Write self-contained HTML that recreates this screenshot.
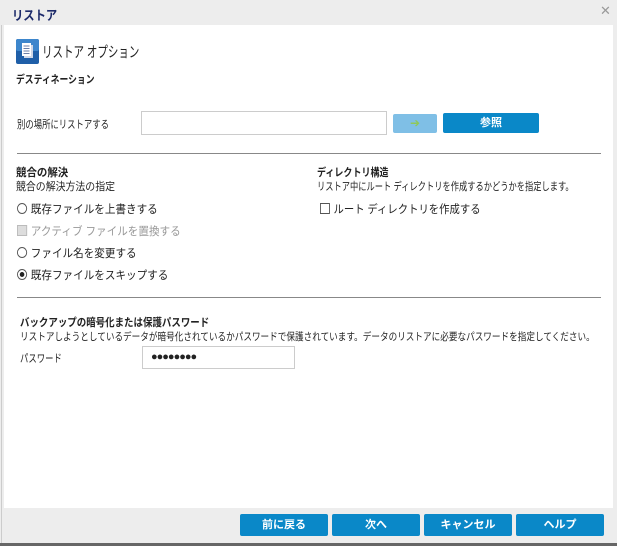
<!DOCTYPE html>
<html><head><meta charset="utf-8"><style>
*{margin:0;padding:0;box-sizing:border-box}
body{width:617px;height:546px;background:#ededed;font-family:"Liberation Sans","Noto Sans CJK JP",sans-serif;font-size:11px;color:#222;position:relative;overflow:hidden}
.a{position:absolute;white-space:nowrap;transform-origin:0 50%}
.b{font-weight:bold}
.main{position:absolute;left:4px;top:25px;width:609px;height:483px;background:#fff}
.btn{position:absolute;top:514px;height:22px;width:88px;background:#0a88c8;color:#fff;font-weight:bold;text-align:center;line-height:22px;font-size:11px;border-radius:2px}
.hr{position:absolute;left:17px;width:584px;height:1px;background:#888}
.radio{display:inline-block;width:11px;height:11px;border:1px solid #555;border-radius:50%;vertical-align:-1px;margin-right:4px;position:relative}
.chk{display:inline-block;width:11px;height:11px;border:1px solid #555;vertical-align:-1px;margin-right:4px}
</style></head><body>
<div class="a b" style="left:12px;top:5px;font-size:13px;color:#1c2a6a;transform:scaleX(.87)">リストア</div>
<div class="a" style="left:600px;top:3px;font-size:13px;color:#999">✕</div>
<div style="position:absolute;left:0;top:543px;width:617px;height:3px;background:#666"></div>
<div style="position:absolute;left:1px;top:25px;width:1px;height:518px;background:#ccc"></div>
<div class="main"></div>
<svg class="a" style="left:16px;top:39px" width="23" height="25"><rect x="0" y="0" width="23" height="25" rx="2" fill="#1f5fa8"/><rect x="0" y="0" width="23" height="12" rx="2" fill="#3d86cc"/><rect x="8" y="6" width="9" height="13" fill="#cfd8e8"/><rect x="6" y="4" width="9" height="13" fill="#fff"/><g stroke="#6b7fa8" stroke-width="1"><line x1="7.5" y1="7" x2="13.5" y2="7"/><line x1="7.5" y1="9.5" x2="13.5" y2="9.5"/><line x1="7.5" y1="12" x2="13.5" y2="12"/><line x1="7.5" y1="14.5" x2="13.5" y2="14.5"/></g></svg>
<div class="a" style="left:42px;top:41px;font-size:15px;transform:scaleX(.7)">リストア オプション</div>
<div class="a b" style="left:16px;top:71px;transform:scaleX(.8)">デスティネーション</div>
<div class="a" style="left:17px;top:116px;transform:scaleX(.76)">別の場所にリストアする</div>
<div class="a" style="left:141px;top:111px;width:246px;height:24px;border:1px solid #ccc"></div>
<div class="a" style="left:393px;top:114px;width:44px;height:19px;background:#7fbfe6;border-radius:2px;color:#8fc85a;text-align:center;line-height:19px;font-size:12px">➔</div>
<div class="a b" style="left:443px;top:113px;width:96px;height:20px;background:#0a88c8;border-radius:2px;color:#fff;text-align:center;line-height:20px">参照</div>
<div class="hr" style="top:153px"></div>
<div class="a b" style="left:16px;top:164px;transform:scaleX(.95)">競合の解決</div>
<div class="a" style="left:16px;top:178px;transform:scaleX(.9)">競合の解決方法の指定</div>
<div class="a" style="left:17px;top:201px;font-size:11.5px;transform:scaleX(.92)"><span class="radio"></span>既存ファイルを上書きする</div>
<div class="a" style="left:17px;top:223px;font-size:11.5px;color:#999;transform:scaleX(.92)"><span class="chk" style="border-color:#bbb;background:#ddd"></span>アクティブ ファイルを置換する</div>
<div class="a" style="left:17px;top:245px;font-size:11.5px;transform:scaleX(.92)"><span class="radio"></span>ファイル名を変更する</div>
<div class="a" style="left:17px;top:267px;font-size:11.5px;transform:scaleX(.92)"><span class="radio"><span style="position:absolute;left:2px;top:2px;width:5px;height:5px;border-radius:50%;background:#222"></span></span>既存ファイルをスキップする</div>
<div class="a b" style="left:317px;top:164px;transform:scaleX(.82)">ディレクトリ構造</div>
<div class="a" style="left:317px;top:178px;transform:scaleX(.75)">リストア中にルート ディレクトリを作成するかどうかを指定します。</div>
<div class="a" style="left:320px;top:201px;font-size:11.5px;transform:scaleX(.9)"><span class="chk"></span>ルート ディレクトリを作成する</div>
<div class="hr" style="top:297px"></div>
<div class="a b" style="left:20px;top:314px;transform:scaleX(.86)">バックアップの暗号化または保護パスワード</div>
<div class="a" style="left:20px;top:329px;font-size:10.5px;transform:scaleX(.82)">リストアしようとしているデータが暗号化されているかパスワードで保護されています。データのリストアに必要なパスワードを指定してください。</div>
<div class="a" style="left:20px;top:350px;transform:scaleX(.76)">パスワード</div>
<div class="a" style="left:142px;top:346px;width:153px;height:23px;border:1px solid #ccc;padding-left:8px;line-height:21px;font-size:11px;letter-spacing:-1px">●●●●●●●●</div>
<div class="btn" style="left:240px">前に戻る</div>
<div class="btn" style="left:332px">次へ</div>
<div class="btn" style="left:424px">キャンセル</div>
<div class="btn" style="left:516px">ヘルプ</div>
</body></html>
